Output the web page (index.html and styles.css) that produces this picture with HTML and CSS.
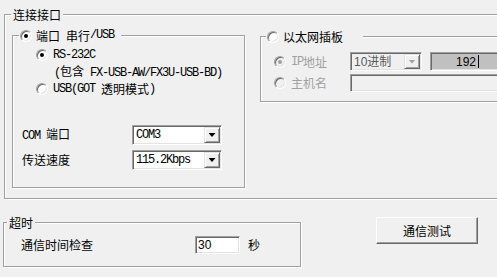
FILE: index.html
```html
<!DOCTYPE html>
<html lang="zh-CN">
<head>
<meta charset="utf-8">
<link rel="stylesheet" href="styles.css">
</head>
<body>
<div class="win">
  <fieldset class="grp conn">
    <legend class="lg">连接接口</legend>
    <div class="conn-body">
      <fieldset class="grp serial">
        <legend class="lg rlg serial-lg"><span class="rb on"></span>端口<span class="m">&nbsp;</span>串行<span class="m">/USB</span></legend>
        <div class="opt"><span class="rb on"></span><span class="m">RS-232C</span></div>
        <div class="sub"><span class="m">(</span>包含<span class="m">&nbsp;FX-USB-AW/FX3U-USB-BD)</span></div>
        <div class="opt opt2"><span class="rb"></span><span class="m">USB(GOT&nbsp;</span>透明模式<span class="m">)</span></div>
        <div class="field f1">
          <span class="lbl"><span class="m">COM&nbsp;</span>端口</span>
          <div class="combo"><span class="val m">COM3</span><span class="drop"><span class="tri"></span></span></div>
        </div>
        <div class="field f2">
          <span class="lbl">传送速度</span>
          <div class="combo"><span class="val m">115.2Kbps</span><span class="drop"><span class="tri"></span></span></div>
        </div>
      </fieldset>
      <fieldset class="grp eth">
        <legend class="lg rlg eth-lg"><span class="rb"></span>以太网插板</legend>
        <div class="ethrow r1">
          <span class="elbl dis"><span class="rb dis on"></span><span class="m">IP</span>地址</span>
          <div class="combo dcombo"><span class="val sans">10进制</span><span class="drop"><span class="tri gray"></span></span></div>
          <div class="ipbox"><span class="oct">192</span><span class="caret"></span></div>
        </div>
        <div class="ethrow r2">
          <span class="elbl dis"><span class="rb dis"></span>主机名</span>
          <div class="hostbox"></div>
        </div>
      </fieldset>
    </div>
  </fieldset>
  <div class="bottom">
    <fieldset class="grp timeout">
      <legend class="lg to-lg">超时</legend>
      <div class="torow">
        <span class="tolbl">通信时间检查</span>
        <div class="edit sans">30</div>
        <span class="unit">秒</span>
      </div>
    </fieldset>
    <div class="btn">通信测试</div>
  </div>
</div>
</body>
</html>
```
FILE: styles.css
```css
html, body {
  margin: 0;
  padding: 0;
}
body {
  width: 497px;
  height: 277px;
  overflow: hidden;
  background: #f0f0f0;
  color: #000;
  font-family: "Noto Sans CJK SC", sans-serif;
  font-size: 12px;
  line-height: 16px;
}
.win {
  width: 497px;
  height: 277px;
  overflow: hidden;
}
.m {
  font-family: "Liberation Mono", "Noto Sans CJK SC", monospace;
  letter-spacing: -1.2px;
}
.sans {
  font-family: "Liberation Sans", "Noto Sans CJK SC", sans-serif;
}

/* group boxes */
.grp {
  border: 1px solid #a0a0a0;
  box-shadow: inset 1px 1px #fff, 1px 1px #fff;
  margin: 0;
  padding: 0;
  min-width: 0;
}
.lg {
  display: flex;
  align-items: center;
  height: 17px;
  line-height: 17px;
  padding: 0 2px;
  background: #f0f0f0;
}
.conn {
  margin: 6px 0 0 4px;
  width: 600px;
  box-sizing: border-box;
  padding-bottom: 10px;
}
.conn > .lg {
  margin-left: 6px;
}
.conn-body {
  display: flex;
  align-items: flex-start;
}
.serial {
  margin: 4px 0 0 7px;
  width: 233px;
  box-sizing: border-box;
  padding: 0 0 17px 0;
}
.rlg {
  padding: 0 7px 0 1px;
}
.rlg .rb {
  margin-right: 4px;
}
.serial-lg {
  margin-left: 6px;
}

/* radio */
.rb {
  display: inline-block;
  width: 12px;
  height: 12px;
  box-sizing: border-box;
  border-radius: 50%;
  border: 1px solid;
  border-color: #a0a0a0 #fff #fff #a0a0a0;
  box-shadow: inset 1px 1px #696969, inset -1px -1px #e3e3e3;
  background: #fff;
  position: relative;
  flex: none;
}
.rb.on::after {
  content: "";
  position: absolute;
  left: 3px;
  top: 3px;
  width: 4px;
  height: 4px;
  border-radius: 50%;
  background: #000;
}
.rb.dis {
  background: #f0f0f0;
}
.rb.dis.on::after {
  background: #a0a0a0;
}

.opt {
  display: flex;
  align-items: center;
  height: 16px;
  margin: 3px 0 0 23px;
}
.opt .rb {
  margin-right: 5px;
}
.opt2 {
  margin-top: 2px;
}
.sub {
  height: 16px;
  margin-left: 41px;
}

.field {
  display: flex;
  align-items: center;
  height: 20px;
  margin-left: 9px;
}
.f1 {
  margin-top: 28px;
}
.f2 {
  margin-top: 5px;
}
.lbl {
  width: 110px;
}

/* sunken controls */
.combo,
.edit,
.ipbox,
.hostbox {
  box-sizing: border-box;
  border: 1px solid;
  border-color: #a0a0a0 #fff #fff #a0a0a0;
  box-shadow: inset 1px 1px #696969, inset -1px -1px #e3e3e3;
}
.combo {
  display: flex;
  align-items: center;
  width: 90px;
  height: 20px;
  padding: 1px;
  background: #fff;
}
.combo .val {
  flex: 1;
  padding-left: 2px;
  white-space: nowrap;
}
.drop {
  display: flex;
  align-items: center;
  justify-content: center;
  width: 16px;
  height: 16px;
  box-sizing: border-box;
  border: 1px solid;
  border-color: #e3e3e3 #696969 #696969 #e3e3e3;
  box-shadow: inset 1px 1px #fff, inset -1px -1px #a0a0a0;
  background: #f0f0f0;
  flex: none;
}
.tri {
  width: 7px;
  height: 4px;
  background: #000;
  clip-path: polygon(0 0, 100% 0, 50% 100%);
}
.tri.gray {
  background: #a0a0a0;
}

/* ethernet */
.eth {
  margin: 5px 0 0 15px;
  width: 300px;
  box-sizing: border-box;
  padding: 0 0 9px 0;
}
.eth-lg {
  margin-left: 5px;
  padding-right: 20px;
}
.ethrow {
  display: flex;
  align-items: center;
  margin-left: 13px;
}
.r1 {
  margin-top: 7px;
  height: 19px;
}
.r2 {
  margin-top: 3px;
  height: 18px;
}
.elbl {
  display: flex;
  align-items: center;
  width: 76px;
  flex: none;
}
.elbl .rb {
  margin-right: 5px;
}
.dis {
  color: #a0a0a0;
}
.dcombo {
  width: 72px;
  height: 19px;
  background: #f0f0f0;
  color: #5a5a5a;
}
.dcombo .drop {
  height: 15px;
}
.ipbox {
  display: flex;
  align-items: center;
  margin-left: 8px;
  width: 120px;
  height: 19px;
  background: #c0c0c0;
  flex: none;
}
.oct {
  width: 45px;
  text-align: right;
  font-family: "Liberation Sans", sans-serif;
}
.caret {
  width: 1px;
  height: 13px;
  margin-left: 2px;
  background: #000;
}
.hostbox {
  width: 200px;
  height: 18px;
  background: #f0f0f0;
  flex: none;
}

/* bottom */
.bottom {
  display: flex;
  align-items: flex-start;
}
.timeout {
  margin: 15px 0 0 3px;
  width: 298px;
  box-sizing: border-box;
  padding: 0 0 12px 0;
}
.to-lg {
  margin-left: 3px;
}
.torow {
  display: flex;
  align-items: center;
  height: 18px;
  margin: 5px 0 0 17px;
}
.tolbl {
  width: 174px;
}
.edit {
  width: 45px;
  height: 18px;
  background: #fff;
  padding-left: 2px;
  line-height: 16px;
}
.unit {
  margin-left: 8px;
}
.btn {
  margin: 18px 0 0 75px;
  width: 102px;
  height: 27px;
  box-sizing: border-box;
  border: 1px solid;
  border-color: #fff #696969 #696969 #fff;
  box-shadow: inset -1px -1px #a0a0a0;
  background: #f0f0f0;
  display: flex;
  align-items: center;
  justify-content: center;
}
```
